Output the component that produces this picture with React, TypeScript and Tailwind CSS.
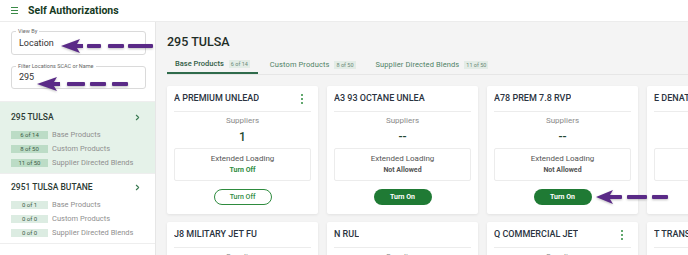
import { ChevronRight } from 'lucide-react';

const LOCATIONS = [
  {
    name: '295 TULSA',
    selected: true,
    counts: [
      { badge: '6 of 14', label: 'Base Products' },
      { badge: '8 of 50', label: 'Custom Products' },
      { badge: '11 of 50', label: 'Supplier Directed Blends' },
    ],
  },
  {
    name: '2951 TULSA BUTANE',
    selected: false,
    counts: [
      { badge: '0 of 1', label: 'Base Products' },
      { badge: '0 of 0', label: 'Custom Products' },
      { badge: '0 of 0', label: 'Supplier Directed Blends' },
    ],
  },
];

const TABS = [
  { label: 'Base Products', badge: '6 of 14', active: true },
  { label: 'Custom Products', badge: '8 of 50', active: false },
  { label: 'Supplier Directed Blends', badge: '11 of 50', active: false },
];

type Product = {
  name: string;
  menu: boolean;
  suppliers: string;
  loading: string;
  on: boolean;
};

const ROW1: Product[] = [
  { name: 'A PREMIUM UNLEAD', menu: true, suppliers: '1', loading: 'Turn Off', on: true },
  { name: 'A3 93 OCTANE UNLEA', menu: false, suppliers: '--', loading: 'Not Allowed', on: false },
  { name: 'A78 PREM 7.8 RVP', menu: false, suppliers: '--', loading: 'Not Allowed', on: false },
  { name: 'E DENATURED ETHAN', menu: false, suppliers: '--', loading: 'Not Allowed', on: false },
];

const ROW2: Product[] = [
  { name: 'J8 MILITARY JET FU', menu: false, suppliers: '--', loading: 'Not Allowed', on: false },
  { name: 'N RUL', menu: false, suppliers: '--', loading: 'Not Allowed', on: false },
  { name: 'Q COMMERCIAL JET', menu: true, suppliers: '--', loading: 'Not Allowed', on: false },
  { name: 'T TRANSMIX', menu: false, suppliers: '--', loading: 'Not Allowed', on: false },
];

function Kebab() {
  return (
    <div className="flex flex-col gap-[1.5px] items-center w-2 mr-[5px]">
      <span className="w-[2.5px] h-[2.5px] rounded-full bg-[#2e8b3e]" />
      <span className="w-[2.5px] h-[2.5px] rounded-full bg-[#2e8b3e]" />
      <span className="w-[2.5px] h-[2.5px] rounded-full bg-[#2e8b3e]" />
    </div>
  );
}

function ProductCard({ p }: { p: Product }) {
  return (
    <div className="w-[151px] shrink-0 h-[128px] bg-white rounded-[2px] shadow-[0_1px_3px_rgba(0,0,0,0.08)] px-[7px] pt-[7px]">
      <div className="flex items-center justify-between h-[12px]">
        <span className="text-[9px] font-medium text-[#2a3340] whitespace-nowrap overflow-hidden">{p.name}</span>
        {p.menu && <Kebab />}
      </div>
      <div className="mt-[6px] border-t border-[#ececec]" />
      <p className="mt-[3px] text-center text-[8px] text-[#8a8a8a] leading-[12px]">Suppliers</p>
      <p className="mt-[2px] text-center text-[12px] font-medium text-[#234a30] leading-[16px]">{p.suppliers}</p>
      <div className="mt-[3px] border border-[#ececec] rounded-[2px] h-[33px] flex flex-col items-center justify-center">
        <span className="text-[8px] text-[#555] leading-[11px]">Extended Loading</span>
        <span className={p.on ? 'text-[7px] font-bold text-[#2e8b3e] leading-[12px]' : 'text-[7px] font-bold text-[#555] leading-[12px]'}>
          {p.loading}
        </span>
      </div>
      <div className="flex justify-center mt-[8px]">
        {p.on ? (
          <button className="w-[58px] h-[16px] rounded-full border border-[#2e8b3e] text-[7px] font-medium text-[#2e8b3e] bg-white">Turn Off</button>
        ) : (
          <button className="w-[58px] h-[16px] rounded-full bg-[#1f7a34] text-[7px] font-bold text-white">Turn On</button>
        )}
      </div>
    </div>
  );
}

function Arrow({ x, y, head, dashes }: { x: number; y: number; head: number; dashes: [number, number][] }) {
  const w = Math.max(...dashes.map(d => d[1])) + 2;
  return (
    <svg className="absolute pointer-events-none drop-shadow-[0_1px_1px_rgba(0,0,0,0.25)]" style={{ left: x, top: y - 8 }} width={w} height={16}>
      <polygon points={`0,8 ${head},1 ${head - 3},6 ${head + 3},6 ${head + 3},10 ${head - 3},10 ${head},15`} fill="#5a2a87" />
      {dashes.map(([a, b], i) => (
        <rect key={i} x={a} y={6} width={b - a} height={4} rx={1} fill="#5a2a87" />
      ))}
    </svg>
  );
}

export default function App() {
  return (
    <div className="relative w-[688px] h-[255px] overflow-hidden bg-white font-['Roboto',sans-serif]">
      <header className="h-[22px] flex items-center gap-[10px] pl-[11px] border-b border-[#ececec]">
        <div className="flex flex-col gap-[1.5px] w-[7px]">
          <span className="h-[1.5px] bg-[#3b8a48]" />
          <span className="h-[1.5px] bg-[#3b8a48]" />
          <span className="h-[1.5px] bg-[#3b8a48]" />
        </div>
        <h1 className="text-[10.5px] font-bold text-[#163a1f]">Self Authorizations</h1>
      </header>

      <div className="flex h-[233px]">
        <aside className="w-[156px] shrink-0 border-r border-[#e6e6e6] bg-white">
          <div className="pl-[11px] pr-[9px] pt-[9px] space-y-[8px]">
            <fieldset className="border border-[#dadada] rounded-[3px] h-[27px] px-[7px] -mt-[3px]">
              <legend className="px-[2px] -ml-[3px] text-[5.5px] text-[#666] leading-[6px]">View By</legend>
              <p className="text-[9px] text-[#333] leading-[14px] mt-[2px]">Location</p>
            </fieldset>
            <fieldset className="border border-[#dadada] rounded-[3px] h-[26px] px-[7px]">
              <legend className="px-[2px] -ml-[3px] text-[5.5px] text-[#666] leading-[6px]">Filter Locations SCAC or Name</legend>
              <p className="text-[9px] text-[#333] leading-[14px] mt-[1px]">295</p>
            </fieldset>
          </div>

          <div className="mt-[12px] border-t border-[#eeeeee]">
            {LOCATIONS.map(loc => (
              <div key={loc.name} className={loc.selected ? 'bg-[#e5f2e9] h-[72px] px-[11px] pt-[9px] border-b border-[#eeeeee]' : 'bg-white h-[70px] px-[11px] pt-[7px] border-b border-[#eeeeee]'}>
                <div className="flex items-center justify-between">
                  <span className="text-[8.5px] font-medium text-[#2c3a33]">{loc.name}</span>
                  <ChevronRight size={9} strokeWidth={3} className="text-[#3a7a52] mr-[2px]" />
                </div>
                <div className="mt-[7px] space-y-[6px]">
                  {loc.counts.map(c => (
                    <div key={c.label} className="flex items-center gap-[4px] h-[8px]">
                      <span className={loc.selected ? 'w-[37px] h-[8px] bg-[#bcdcc6] text-[6px] text-[#3d5c48] flex items-center justify-center' : 'w-[37px] h-[8px] bg-[#dcece2] text-[6px] text-[#3d5c48] flex items-center justify-center'}>
                        {c.badge}
                      </span>
                      <span className="text-[7.5px] text-[#8f8f8f]">{c.label}</span>
                    </div>
                  ))}
                </div>
              </div>
            ))}
          </div>
        </aside>

        <main className="flex-1 bg-[#f4f4f4] pl-[11px] pt-[12px] overflow-hidden">
          <h2 className="text-[12.5px] font-medium text-[#1f2d27] leading-[16px]">295 TULSA</h2>
          <div className="mt-[10px] flex items-end border-b border-[#e6e6e6] h-[15px]">
            {TABS.map(t => (
              <div key={t.label} className={t.active ? 'flex items-center gap-[5px] px-[8px] h-[15px] border-b-[2px] border-[#2f6b4b] mr-[4px]' : 'flex items-center gap-[5px] px-[8px] h-[15px] mr-[4px]'}>
                <span className={t.active ? 'text-[7.5px] font-medium text-[#2f5b44] -mt-[4px]' : 'text-[7.5px] text-[#4f8266] tracking-[0.1px] -mt-[4px]'}>{t.label}</span>
                <span className="text-[5.5px] text-[#6b8a78] bg-[#e3ece6] px-[2px] h-[8px] leading-[8px] -mt-[4px]">{t.badge}</span>
              </div>
            ))}
          </div>

          <div className="mt-[11px] flex flex-col gap-[8px]">
            <div className="flex gap-[9px]">
              {ROW1.map(p => (
                <ProductCard key={p.name} p={p} />
              ))}
            </div>
            <div className="flex gap-[9px]">
              {ROW2.map(p => (
                <ProductCard key={p.name} p={p} />
              ))}
            </div>
          </div>
        </main>
      </div>

      <Arrow x={61} y={46} head={19} dashes={[[16, 20], [26, 40], [47, 63], [67, 92]]} />
      <Arrow x={37} y={84} head={20} dashes={[[17, 22], [30, 48], [53, 69], [75, 91]]} />
      <Arrow x={596} y={197} head={17} dashes={[[14, 26], [31, 51], [56, 72]]} />
    </div>
  );
}
